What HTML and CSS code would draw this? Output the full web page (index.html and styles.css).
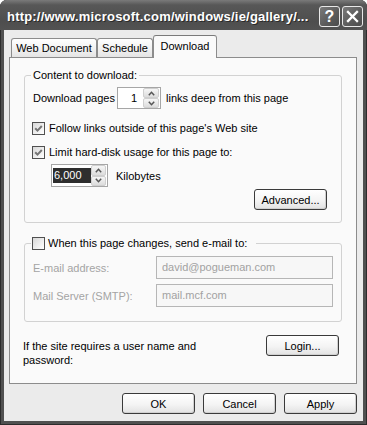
FILE: index.html
```html
<!DOCTYPE html>
<html>
<head>
<meta charset="utf-8">
<link rel="stylesheet" href="styles.css">
</head>
<body>
<div class="window">
  <div class="titlebar">
    <span class="title">http://www.microsoft.com/windows/ie/gallery/...</span>
    <span class="cbtn help">?</span>
    <span class="cbtn close"><svg width="19" height="19" viewBox="0 0 19 19"><path d="M5 5 L14 14 M14 5 L5 14" stroke="#fff" stroke-width="2.3" stroke-linecap="square"/></svg></span>
  </div>
  <div class="client">
    <div class="tabs">
      <div class="tab t1">Web Document</div>
      <div class="tab t2">Schedule</div>
      <div class="tab t3 active">Download</div>
    </div>
    <div class="panel">
      <fieldset class="group g1">
        <legend>Content to download:</legend>
        <div class="row-pages">
          <span class="lbl-pages">Download pages</span>
          <div class="spin spin1">
            <span class="spin-val">1</span>
            <div class="spin-btns">
              <span class="spin-btn"><svg width="7" height="5" viewBox="0 0 7 5"><path d="M0.8 4.2 L3.5 1.3 L6.2 4.2" fill="none" stroke="#555" stroke-width="1.5"/></svg></span>
              <span class="spin-btn"><svg width="7" height="5" viewBox="0 0 7 5"><path d="M0.8 0.8 L3.5 3.7 L6.2 0.8" fill="none" stroke="#555" stroke-width="1.5"/></svg></span>
            </div>
          </div>
          <span class="after-spin">links deep from this page</span>
        </div>
        <div class="check-row cr1">
          <span class="cb"><svg width="11" height="11" viewBox="0 0 11 11"><path d="M2.2 5.2 L4.5 7.6 L8.8 3" fill="none" stroke="#757575" stroke-width="2"/></svg></span>
          <span>Follow links outside of this page's Web site</span>
        </div>
        <div class="check-row cr2">
          <span class="cb"><svg width="11" height="11" viewBox="0 0 11 11"><path d="M2.2 5.2 L4.5 7.6 L8.8 3" fill="none" stroke="#757575" stroke-width="2"/></svg></span>
          <span>Limit hard-disk usage for this page to:</span>
        </div>
        <div class="row-kb">
          <div class="spin spin2">
            <span class="spin-val2"><span class="sel">6,000</span></span>
            <div class="spin-btns">
              <span class="spin-btn"><svg width="7" height="5" viewBox="0 0 7 5"><path d="M0.8 4.2 L3.5 1.3 L6.2 4.2" fill="none" stroke="#555" stroke-width="1.5"/></svg></span>
              <span class="spin-btn"><svg width="7" height="5" viewBox="0 0 7 5"><path d="M0.8 0.8 L3.5 3.7 L6.2 0.8" fill="none" stroke="#555" stroke-width="1.5"/></svg></span>
            </div>
          </div>
          <span class="kb">Kilobytes</span>
        </div>
        <div class="row-adv">
          <span class="btn">Advanced...</span>
        </div>
      </fieldset>

      <fieldset class="group g2">
        <legend><span class="cb"></span><span>When this page changes, send e-mail to:</span></legend>
        <div class="field-row f1">
          <span class="flabel">E-mail address:</span>
          <span class="finput">david@pogueman.com</span>
        </div>
        <div class="field-row f2">
          <span class="flabel">Mail Server (SMTP):</span>
          <span class="finput">mail.mcf.com</span>
        </div>
      </fieldset>

      <div class="login-row">
        <span class="login-text">If the site requires a user name and<br>password:</span>
        <span class="btn">Login...</span>
      </div>
    </div>
    <div class="buttons">
      <span class="btn">OK</span>
      <span class="btn">Cancel</span>
      <span class="btn">Apply</span>
    </div>
  </div>
</div>
</body>
</html>
```

FILE: styles.css
```css
* { box-sizing: border-box; }
html, body { margin: 0; padding: 0; background: #ffffff; }
body {
  font-family: "Liberation Sans", Arial, sans-serif;
  font-size: 11px;
  color: #000;
}
.window {
  width: 367px;
  height: 425px;
  background: #505050;
  border-radius: 7px 7px 0 0;
  display: flex;
  flex-direction: column;
  box-shadow: inset 1px 0 0 #2c2c2c, inset -1px 0 0 #2c2c2c, inset 0 -1px 0 #2c2c2c;
}
.titlebar {
  height: 30px;
  display: flex;
  align-items: flex-start;
  padding: 6px 4px 0 7px;
  background: linear-gradient(#7a7a7a, #575757 5px, #4e4e4e 22px, #525252);
  border-radius: 7px 7px 0 0;
}
.title {
  flex: 1;
  color: #fff;
  font-weight: bold;
  font-size: 13px;
  line-height: 21px;
  letter-spacing: 0.2px;
  text-shadow: 1px 1px 0 #2a2a2a;
  white-space: nowrap;
  overflow: hidden;
}
.cbtn {
  width: 21px;
  height: 21px;
  border: 1px solid #e8e8e8;
  border-radius: 3px;
  background: linear-gradient(135deg, #7a7a7a, #5a5a5a 60%, #4c4c4c);
  display: flex;
  align-items: center;
  justify-content: center;
  color: #fff;
}
.help {
  margin-right: 2px;
  font-weight: bold;
  font-size: 16px;
  line-height: 19px;
}
.client {
  flex: 1;
  margin: 0 4px 4px;
  background: #ebebeb;
  padding: 5px 6px 7px 5px;
  display: flex;
  flex-direction: column;
}
.tabs {
  display: flex;
  align-items: flex-end;
  height: 22px;
  padding-left: 2px;
}
.tab {
  height: 19px;
  border: 1px solid #8c8c8c;
  border-bottom: none;
  border-radius: 3px 3px 0 0;
  background: linear-gradient(#ffffff, #f0f0f0 60%, #e4e4e4);
  display: flex;
  align-items: center;
  justify-content: center;
  position: relative;
}
.t1 { width: 86px; }
.t2 { width: 56px; }
.t3 { width: 64px; }
.tab.active {
  height: 23px;
  margin-bottom: -1px;
  background: #fafafa;
  z-index: 1;
  padding-bottom: 3px;
  border-top-color: #7a7a7a;
}
.panel {
  height: 327px;
  border: 1px solid #8c8c8c;
  background: #fafafa;
  padding: 11px 14px 0;
  display: flex;
  flex-direction: column;
}
fieldset {
  margin: 0;
  min-width: 0;
  border: 1px solid #d2d2d2;
  border-radius: 3px;
}
legend {
  padding: 0 2px;
  margin-left: -2px;
  line-height: 13px;
  height: 13px;
}
.g1 { padding: 0 14px 12px 8px; }
.row-pages {
  display: flex;
  align-items: center;
  height: 22px;
  margin-top: 5px;
}
.lbl-pages { width: 84px; }
.spin {
  display: flex;
  border: 1px solid #a6a6a6;
  background: #fff;
  height: 22px;
}
.spin1 { width: 44px; }
.spin-val {
  flex: 1;
  text-align: right;
  padding-right: 6px;
  line-height: 20px;
}
.spin-btns {
  width: 17px;
  display: flex;
  flex-direction: column;
  padding: 0 1px 0 0;
}
.spin-btn {
  flex: 1;
  background: linear-gradient(#f6f6f6, #dcdcdc);
  border: 1px solid #cfcfcf;
  border-radius: 2px;
  display: flex;
  align-items: center;
  justify-content: center;
}
.after-spin { margin-left: 5px; }
.check-row {
  display: flex;
  align-items: center;
  height: 13px;
  margin-left: -1px;
  line-height: 13px;
}
.cr1 { margin-top: 13px; }
.cr2 { margin-top: 11px; }
.cb {
  width: 13px;
  height: 13px;
  border: 1px solid #505050;
  background: linear-gradient(135deg, #d8d8d8, #f4f4f4 70%, #ffffff);
  margin-right: 4px;
  display: flex;
  flex: none;
}
.row-kb {
  display: flex;
  align-items: center;
  margin-top: 5px;
  margin-left: 18px;
  height: 23px;
}
.spin2 { width: 57px; height: 23px; }
.spin-val2 {
  flex: 1;
  display: flex;
  align-items: center;
  padding-left: 1px;
}
.sel {
  background: #2e2e2e;
  color: #fff;
  line-height: 15px;
  padding: 0 1px;
  width: 38px;
}
.kb { margin-left: 8px; }
.row-adv {
  display: flex;
  justify-content: flex-end;
  margin-top: 2px;
}
.btn {
  width: 73px;
  height: 21px;
  border: 1px solid #3a3a3a;
  border-radius: 3px;
  background: linear-gradient(#ffffff, #f4f4f4 55%, #e2e2e2);
  box-shadow: inset -1px -1px 0 #d0d0d0;
  display: flex;
  align-items: center;
  justify-content: center;
  flex: none;
}
.g2 {
  margin-top: 14px;
  padding: 0 8px 14px 8px;
}
.g2 legend {
  display: flex;
  align-items: center;
  margin-left: -2px;
  padding: 0 9px 0 1px;
}
.g2 legend .cb { margin-right: 3px; }
.field-row {
  display: flex;
  align-items: center;
  height: 23px;
}
.f1 { margin-top: 6px; }
.f2 { margin-top: 5px; }
.flabel { width: 123px; color: #a4a4a4; }
.finput {
  flex: 1;
  height: 23px;
  border: 1px solid #b6b6b6;
  background: #f7f7f7;
  color: #a2a2a2;
  padding-left: 5px;
  line-height: 21px;
}
.login-row {
  display: flex;
  justify-content: space-between;
  align-items: flex-start;
  margin: 13px 3px 0 -1px;
}
.login-text {
  margin-top: 4px;
  line-height: 14px;
}
.buttons {
  display: flex;
  justify-content: flex-end;
  gap: 8px;
  margin-top: 9px;
}
```
